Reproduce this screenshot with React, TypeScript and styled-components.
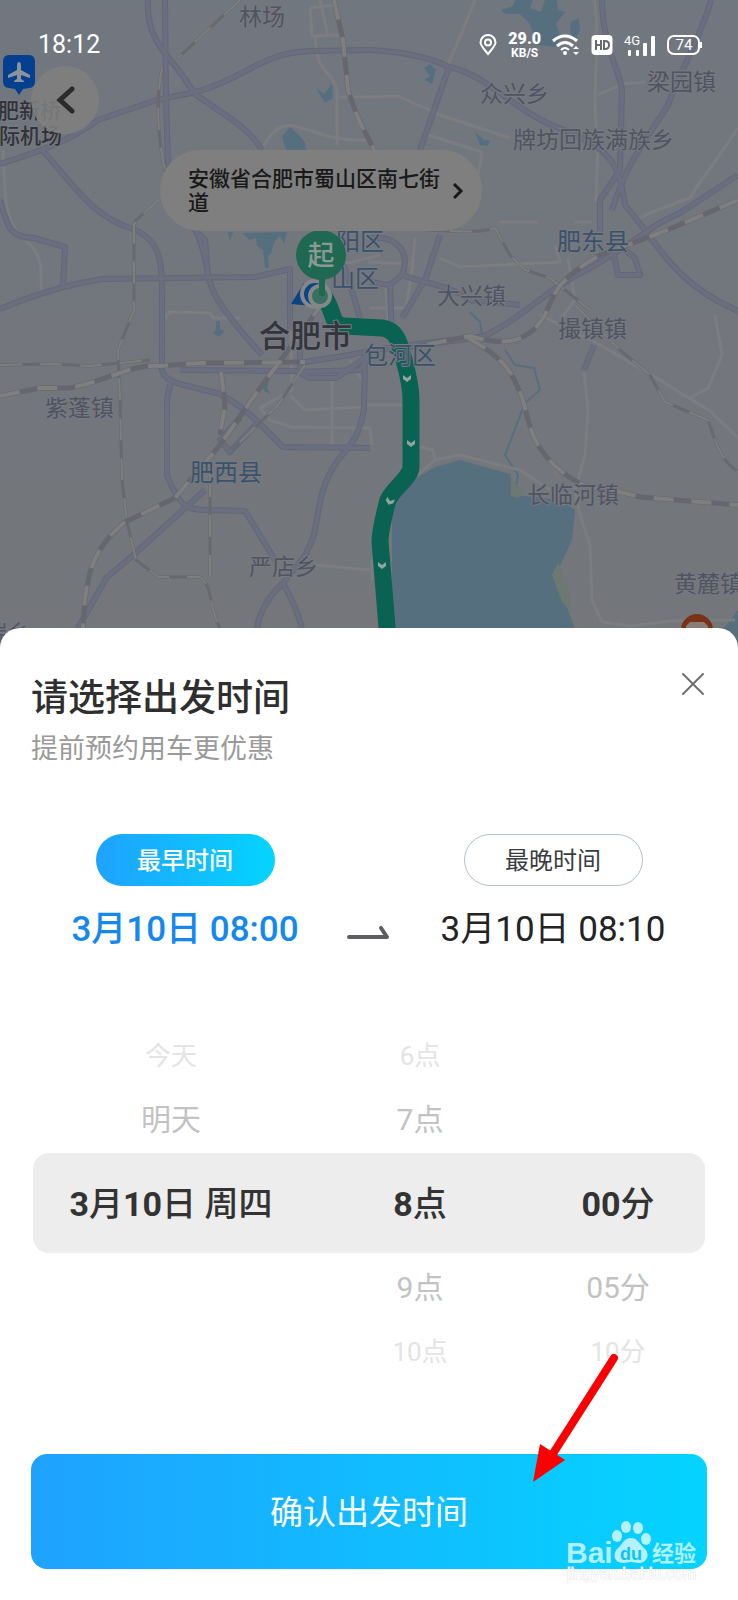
import React, { useState } from "react";
import styled, { createGlobalStyle, css } from "styled-components";

const GlobalStyle = createGlobalStyle`
  *, *::before, *::after { box-sizing: border-box; }
  body {
    margin: 0;
    background: #73777d;
    font-family: Roboto, "Noto Sans CJK SC", sans-serif;
    color: #2c2d2f;
  }
  button {
    font: inherit;
    color: inherit;
    border: 0;
    padding: 0;
    background: none;
    cursor: pointer;
  }
`;

const Page = styled.div`
  display: flex;
  flex-direction: column;
  min-height: 100vh;
  overflow: hidden;
`;

const MapArea = styled.header`
  position: relative;
  flex: 1 0 auto;
  min-height: 480px;
`;

const MapCanvas = styled.svg`
  position: absolute;
  inset: 0;
  width: 100%;
  height: 100%;
  font-family: "Noto Sans CJK SC", sans-serif;
`;

const StatusBar = styled.div`
  position: relative;
  display: flex;
  align-items: center;
  justify-content: space-between;
  padding: 29px 36px 0 38px;
  color: #fff;
`;

const Clock = styled.time`
  font-size: 25px;
  line-height: 32px;
`;

const StatusIcons = styled.div`
  display: flex;
  align-items: center;
  gap: 11px;
`;

const Speed = styled.div`
  display: flex;
  flex-direction: column;
  align-items: center;
  font-size: 12px;
  line-height: 12px;
  font-weight: 700;

  strong {
    font-size: 16px;
    line-height: 16px;
  }
`;

const BackButton = styled.button`
  position: relative;
  display: grid;
  place-items: center;
  width: 68px;
  height: 68px;
  margin: 5px 0 0 31px;
  border-radius: 50%;
  background: rgba(127, 127, 127, 0.88);
`;

const AddressCallout = styled.button`
  position: absolute;
  top: 150px;
  left: 160px;
  display: flex;
  align-items: center;
  gap: 8px;
  width: 322px;
  height: 81px;
  padding: 0 16px 0 28px;
  border-radius: 40px;
  background: #7f7f7f;
  color: #191919;
  font-size: 21px;
  line-height: 24px;
  font-weight: 500;
  text-align: left;

  span {
    flex: 1;
  }
`;

const Sheet = styled.main`
  position: relative;
  margin-top: -20px;
  padding-bottom: 31px;
  border-radius: 20px 20px 0 0;
  background: #fff;
`;

const SheetHeader = styled.div`
  display: flex;
  align-items: flex-start;
  justify-content: space-between;
  padding: 36px 25px 0 31px;
`;

const Title = styled.h1`
  margin: 13px 0 0;
  font-size: 37px;
  line-height: 44px;
  font-weight: 500;
  color: #2f2f2f;
`;

const Subtitle = styled.p`
  margin: 10px 0 0;
  font-size: 27px;
  line-height: 36px;
  color: #9a9a9a;
`;

const CloseButton = styled.button`
  display: grid;
  place-items: center;
  width: 40px;
  height: 40px;
`;

const Range = styled.div`
  display: grid;
  grid-template-columns: 1fr 44px 1fr;
  margin-top: 67px;
  padding: 0 23px;
`;

const RangeSide = styled.div`
  display: flex;
  flex-direction: column;
  align-items: center;
  gap: 20px;
`;

const RangeTab = styled.button<{ $active: boolean }>`
  width: 179px;
  height: 52px;
  padding-top: 2px;
  border-radius: 26px;
  font-size: 24px;
  line-height: 48px;
  ${({ $active }) =>
    $active
      ? css`
          background: linear-gradient(90deg, #1fa2ff, #04d4ff);
          color: #fff;
          font-weight: 500;
        `
      : css`
          border: 1px solid #b4bfc9;
          color: #3a3c3f;
        `}
`;

const RangeTime = styled.time<{ $active: boolean }>`
  font-size: 35px;
  line-height: 48px;
  white-space: nowrap;
  color: ${({ $active }) => ($active ? "#1488ee" : "#222426")};
  font-weight: ${({ $active }) => ($active ? 500 : 400)};
`;

const RangeArrow = styled.svg`
  align-self: end;
  margin-bottom: 14px;
`;

const Wheels = styled.div`
  position: relative;
  display: grid;
  grid-template-columns: 276fr 222fr 174fr;
  margin: 71px 33px 0;
`;

const WheelBand = styled.div`
  position: absolute;
  top: 128px;
  left: 0;
  right: 0;
  height: 100px;
  border-radius: 16px;
  background: #ededed;
`;

const Wheel = styled.div`
  position: relative;
  display: grid;
  grid-template-rows: 60px 68px 100px 68px 60px;
`;

type Distance = 0 | 1 | 2;

const wheelTone = {
  0: css`
    font-size: 34px;
    font-weight: 500;
    color: #333;
  `,
  1: css`
    font-size: 30px;
    color: #c2c2c2;
  `,
  2: css`
    font-size: 26px;
    color: #e4e4e4;
  `,
};

const WheelOption = styled.button<{ $distance: Distance }>`
  padding-bottom: 4px;
  white-space: nowrap;
  ${({ $distance }) => wheelTone[$distance]}

  b {
    font-weight: 700;
  }
`;

const ConfirmButton = styled.button`
  display: block;
  width: calc(100% - 62px);
  height: 115px;
  margin: 73px 31px 0;
  padding-bottom: 4px;
  border-radius: 16px;
  background: linear-gradient(90deg, #1fa2ff, #04d4ff);
  color: #fff;
  font-size: 33px;
`;

const PointerArrow = styled.svg`
  position: absolute;
  right: 116px;
  bottom: 114px;
  pointer-events: none;
`;

const Watermark = styled.svg`
  position: absolute;
  right: 27px;
  bottom: 8px;
  pointer-events: none;
`;

const expressways = [
  "M148 0 C146 34 162 50 177 68 L196 95 C230 118 250 130 262 150",
  "M165 0 L166 98 L168 164 C185 210 203 235 208 275 C214 300 225 310 240 330 L262 355",
  "M0 164 C45 150 70 140 98 120 L157 100 L200 91 C250 75 262 53 310 51 L370 50",
  "M42 150 C70 180 90 215 130 228 C160 238 163 260 162 300 L162 370 C165 385 190 385 220 394 C250 410 265 430 283 447 L370 448",
  "M0 200 C8 230 12 238 34 238 L65 247 L63 285",
  "M0 309 C40 292 70 284 103 279 L255 277 L290 269 L290 330",
  "M170 384 L167 400 L167 475 C180 508 187 510 210 510 L245 511 L275 560",
  "M205 490 L130 558 L107 577 L78 628",
  "M370 50 C410 52 435 60 449 67 C490 75 515 115 570 132 C610 150 620 165 625 205 L645 230 C670 265 690 290 738 311",
  "M449 67 L420 150",
  "M602 0 C603 50 620 70 622 90 L620 170 L600 200 L600 235",
  "M711 0 C700 40 680 70 668 105 C650 135 628 158 612 210",
  "M738 175 L680 213 C650 225 640 240 590 268 C545 290 520 320 484 336 C440 345 390 345 350 355 L305 362",
  "M300 345 L300 372 L360 370 L372 350 L410 345 L450 340",
  "M365 355 L364 410 C358 440 350 445 338 460 C310 500 325 525 303 558 L283 583 C270 595 260 610 257 628",
  "M283 583 C292 600 297 610 302 628",
  "M370 238 C400 235 410 255 402 275 L390 285 L370 282",
  "M440 235 L425 280 L402 318",
  "M402 275 C430 285 450 285 470 300 L520 305",
  "M614 255 L618 275 L640 275 L635 258 L612 240",
  "M180 370 L296 371 L310 378 L336 378 L365 358",
  "M240 418 L220 440 L230 452 L260 420",
  "M208 275 L205 240 L190 225",
  "M594 345 L584 370",
  "M325 238 L345 268 L360 318 M390 285 L392 340",
];

const minorRoads = [
  "M3 150 C5 200 5 220 20 235 C50 260 38 275 42 290",
  "M475 0 L465 25 L448 65",
  "M368 97 L398 96 L440 115 L510 138",
  "M428 135 L482 152 L478 175",
  "M594 0 C602 40 590 100 598 140 L596 200 L610 190",
  "M598 95 L622 84 L645 82",
  "M738 128 C710 170 700 180 690 198 C670 205 650 212 640 218",
  "M310 8 L312 36 L340 35 M320 0 L328 36 M310 8 L335 5",
  "M315 36 C318 80 330 65 337 90 L337 145 M340 97 L370 97",
  "M262 150 C270 130 285 120 300 128 C315 130 330 142 370 140",
  "M165 318 L170 312 L210 313 L213 318 L240 318 M290 300 L292 390 L260 408 L270 420 L292 427 L370 428",
  "M290 395 L305 410 L365 407 M332 380 L332 445 M350 360 L365 385 L366 405",
  "M440 258 L460 267 L560 262 L555 245 M368 262 L410 264",
  "M415 238 L412 270 L406 310 M385 280 L390 340 M370 308 L405 308",
  "M500 222 L538 222 M575 222 L592 222 M340 265 L380 255",
  "M568 258 L575 300 L560 320 M540 315 L595 342 L655 377 L710 411 L738 438",
  "M715 315 L722 355 L708 388 L690 398",
  "M584 372 L588 410 L585 455 L575 490 L580 515 L590 545 L592 600 L602 622 L630 626",
  "M418 475 L435 460 L460 455 L520 470 L550 490",
  "M315 565 L370 570 M372 560 L372 580 M630 626 L670 621 L735 620",
  "M365 405 L402 405 M370 428 L372 445 M420 447 L433 450 L435 460",
];

const mainRailways = [
  "M0 396 L40 388 L70 388 C110 380 130 364 160 366 L200 363 L305 362",
  "M325 300 L255 395 L220 445 L175 498 L125 522 C90 550 85 580 83 628",
  "M738 200 L660 233 L600 255 C560 278 555 290 545 315 C530 340 510 348 470 336 L400 350",
  "M468 338 C510 360 515 380 523 400 C530 430 535 450 560 470 C590 495 600 485 640 497 L738 505",
  "M334 0 L343 40 L348 90 C360 130 372 140 380 165",
  "M221 372 L225 405 L220 435",
];

const branchRailways = [
  "M0 365 L55 364 L90 366 L150 360",
  "M136 222 L134 225 L134 310 L118 350 L120 400 L122 480 L127 522 L136 560 L158 577 L200 577 C213 585 208 605 220 628",
  "M370 225 C430 230 475 235 495 228 L510 255 L525 270 L550 278 L590 310",
  "M575 305 L620 350 L650 375 L665 402 L708 420 C715 440 720 460 738 472",
  "M210 475 L210 577",
  "M240 0 L178 58",
  "M160 199 L134 222",
  "M162 68 C155 100 158 150 168 180",
  "M305 365 L278 405 L232 450",
];

type PlaceKind = "town" | "county" | "city";

const places: { name: string; x: number; y: number; kind: PlaceKind }[] = [
  { name: "林场", x: 239, y: 25, kind: "town" },
  { name: "众兴乡", x: 480, y: 102, kind: "town" },
  { name: "梁园镇", x: 647, y: 90, kind: "town" },
  { name: "牌坊回族满族乡", x: 513, y: 148, kind: "town" },
  { name: "肥东县", x: 557, y: 250, kind: "county" },
  { name: "大兴镇", x: 437, y: 304, kind: "town" },
  { name: "撮镇镇", x: 558, y: 337, kind: "town" },
  { name: "阳区", x: 336, y: 250, kind: "county" },
  { name: "山区", x: 331, y: 287, kind: "county" },
  { name: "包河区", x: 364, y: 364, kind: "county" },
  { name: "紫蓬镇", x: 45, y: 416, kind: "town" },
  { name: "肥西县", x: 190, y: 481, kind: "county" },
  { name: "严店乡", x: 249, y: 575, kind: "town" },
  { name: "长临河镇", x: 527, y: 503, kind: "town" },
  { name: "黄麓镇", x: 674, y: 592, kind: "town" },
  { name: "端乡", x: -16, y: 641, kind: "town" },
  { name: "合肥市", x: 259, y: 347, kind: "city" },
];

const placeColor: Record<PlaceKind, string> = {
  town: "#505362",
  county: "#3a516b",
  city: "#33343d",
};

const routeChevrons = [
  { x: 407, y: 378, turn: 0 },
  { x: 411, y: 443, turn: 0 },
  { x: 390, y: 501, turn: 20 },
  { x: 382, y: 565, turn: 0 },
];

function Lines({ paths }: { paths: string[] }) {
  return (
    <>
      {paths.map((d) => (
        <path key={d} d={d} />
      ))}
    </>
  );
}

function CityMap() {
  return (
    <MapCanvas viewBox="0 0 738 648" preserveAspectRatio="xMidYMid slice" aria-label="合肥市地图">
      <defs>
        <linearGradient id="land" x1="0" y1="0" x2="0" y2="1">
          <stop offset="0" stopColor="#71777f" />
          <stop offset="1" stopColor="#74767a" />
        </linearGradient>
      </defs>
      <rect width="738" height="648" fill="url(#land)" />

      <g fill="#566f7f">
        <path d="M435 467 L460 460 L510 474 L515 495 L560 500 L575 510 L572 540 L558 570 L568 610 L582 648 L392 648 L392 500 L418 477 Z" />
        <path d="M730 648 L724 628 L738 610 V648 Z" />
        <path d="M501 10 L513 6 L515 0 L533 0 L530 8 L541 12 L545 0 L557 0 L558 10 L565 12 L556 24 L561 38 L555 47 L537 45 L530 24 L520 14 L505 14 Z" />
        <path d="M570 22 L579 18 L580 30 L575 40 L571 35 Z M424 68 L430 64 L436 70 L432 84 L424 80 L430 76 Z M475 132 L484 140 L490 140 L488 146 L480 145 Z" />
        <path d="M316 88 L324 94 L332 84 L333 98 L325 103 Z M282 136 L290 127 L298 134 L305 142 L306 150 L286 150 Z" />
        <path d="M228 232 L233 232 L230 241 Z M242 233 L287 232 L284 244 L280 236 L274 242 L271 254 L268 256 L269 268 L265 268 L263 250 L257 246 L256 238 L250 240 Z" />
        <path d="M216 321 L220 321 L220 329 L225 331 L219 337 L213 333 L216 330 Z M262 382 L270 378 L267 388 L271 394 L264 391 Z" />
      </g>
      <path
        d="M470 312 L480 322 L482 334 M505 350 L515 365 L534 368 L540 390 L525 403 L505 455 L518 475 L514 498"
        fill="none"
        stroke="#566f7f"
        strokeWidth="2"
      />
      <path d="M558 563 L568 590 L572 612 L562 602 L552 575 Z M511 480 L525 492 L518 498 L511 496 Z" fill="#6c7870" />

      <g fill="none" strokeLinejoin="round">
        <g stroke="#7c7d80" strokeWidth="3">
          <Lines paths={minorRoads} />
        </g>
        <g stroke="#62677a" strokeWidth="6">
          <Lines paths={expressways} />
        </g>
        <g stroke="#6a6e7e" strokeWidth="4">
          <Lines paths={expressways} />
        </g>
        <g stroke="#67696f" strokeWidth="3">
          <Lines paths={branchRailways} />
        </g>
        <g stroke="#7d7e7e" strokeWidth="2" strokeDasharray="22 18">
          <Lines paths={branchRailways} />
        </g>
        <g stroke="#66676e" strokeWidth="5">
          <Lines paths={mainRailways} />
        </g>
        <g stroke="#7e7f7e" strokeWidth="4" strokeDasharray="20 18">
          <Lines paths={mainRailways} />
        </g>
      </g>

      <path
        d="M322 294 C334 306 330 326 344 326 L382 328 C398 330 400 345 404 360 Q411 385 411 400 L411 466 C411 478 395 486 388 500 C384 515 380 530 380 542 L384 590 L388 640"
        fill="none"
        stroke="#0a6253"
        strokeWidth="17"
        strokeLinejoin="round"
      />
      {routeChevrons.map((c) => (
        <path
          key={c.y}
          d="M-4 -3 L0 0 L4 -3 V1 L0 4 L-4 1 Z"
          fill="#8fa59f"
          transform={`translate(${c.x} ${c.y}) rotate(${c.turn})`}
        />
      ))}

      <g stroke="#777a80" strokeWidth="2" paintOrder="stroke" strokeLinejoin="round">
        {places.map((p) => (
          <text
            key={p.name}
            x={p.x}
            y={p.y}
            fontSize={p.kind === "city" ? 31 : p.kind === "county" ? 24 : 23}
            fontWeight={p.kind === "city" ? 500 : 400}
            fill={placeColor[p.kind]}
          >
            {p.name}
          </text>
        ))}
        <g fontSize="21" fontWeight="500" fill="#30323a">
          <text x="-2" y="118">肥新桥</text>
          <text x="-1" y="143">际机场</text>
        </g>
      </g>

      <path d="M9 55 H29 Q35 55 35 62 V81 Q35 88 29 88 L23 89 L19 95 L15 89 L9 88 Q3 88 3 81 V62 Q3 55 9 55 Z" fill="#053f8f" />
      <path
        d="M19 62 Q21 62 21 66 V70 L30 75 V78 L21 75 V79 L24 81 V82 H14 V81 L17 79 V75 L8 78 V75 L17 70 V66 Q17 62 19 62 Z"
        fill="#8d939c"
      />

      <path d="M304 283 L291 304 L312 306 Z" fill="#0b4483" />
      <circle cx="315" cy="294" r="13" fill="#0b4483" stroke="#858789" strokeWidth="4" />
      <circle cx="320" cy="296" r="10" fill="#39705f" stroke="#858789" strokeWidth="4" />
      <path d="M319 276 H325 V296 H319 Z" fill="#1f6852" />
      <circle cx="321" cy="255" r="25" fill="#1f6852" />
      <text x="321" y="265" fontSize="27" fontWeight="500" fill="#8b9a96" textAnchor="middle">起</text>

      <circle cx="697" cy="630" r="16" fill="#7a3216" />
      <path d="M686 626 L690 622 H704 L708 626 V630 H686 Z" fill="#8a7d78" />
    </MapCanvas>
  );
}

function StatusGlyphs() {
  return (
    <StatusIcons>
      <svg width="18" height="22" viewBox="0 0 18 22" fill="none" stroke="#fff" strokeWidth="2">
        <path d="M9 20 C4 14 1.500 11.500 1.500 8.500 A7.500 7.500 0 0 1 16.500 8.500 C16.500 11.500 14 14 9 20 Z" />
        <circle cx="9" cy="8.500" r="3" />
      </svg>
      <Speed>
        <strong>29.0</strong>
        <span>KB/S</span>
      </Speed>
      <svg width="28" height="22" viewBox="0 0 28 22" fill="none" stroke="#fff" strokeWidth="3">
        <path d="M1 7 Q13 -3 25 7" />
        <path d="M5 12 Q13 5 21 12" />
        <path d="M9 16 Q13 12 17 16" strokeWidth="2" />
        <circle cx="13" cy="19" r="2" fill="#fff" stroke="none" />
        <path d="M21 15 L24 12 L27 15 Z M21 18 L24 21 L27 18 Z" fill="#fff" stroke="none" />
      </svg>
      <svg width="22" height="22" viewBox="0 0 22 22">
        <rect x="0.500" y="1" width="21" height="20" rx="4" fill="#fff" />
        <path d="M5 6 V16 M10 6 V16 M5 11 H10 M13 7 V15 H14 Q18 15 18 11 Q18 7 14 7 Z" fill="none" stroke="#666a70" strokeWidth="2" />
      </svg>
      <svg width="32" height="24" viewBox="0 0 32 24" fill="#fff">
        <text x="0" y="12" fontSize="13" fontFamily="Roboto, sans-serif">4G</text>
        <rect x="4" y="17" width="3" height="6" rx="1" />
        <rect x="12" y="17" width="3" height="6" rx="1" />
        <rect x="19" y="10" width="4" height="13" rx="1" />
        <rect x="27" y="3" width="4" height="20" rx="1" />
      </svg>
      <svg width="35" height="20" viewBox="0 0 35 20" fill="none">
        <rect x="1" y="1" width="31" height="18" rx="6" stroke="#fff" strokeWidth="2" />
        <path d="M34 7 V13" stroke="#fff" strokeWidth="2" />
        <text x="17" y="15" fontSize="15" fill="#fff" textAnchor="middle" fontFamily="Roboto, sans-serif">74</text>
      </svg>
    </StatusIcons>
  );
}

type Option = { digits?: string; text: string; rest?: { digits: string; text: string } } | null;

const wheels: { label: string; options: Option[] }[] = [
  {
    label: "日期",
    options: [
      { text: "今天" },
      { text: "明天" },
      { digits: "3", text: "月", rest: { digits: "10", text: "日 周四" } },
      null,
      null,
    ],
  },
  {
    label: "小时",
    options: [
      { digits: "6", text: "点" },
      { digits: "7", text: "点" },
      { digits: "8", text: "点" },
      { digits: "9", text: "点" },
      { digits: "10", text: "点" },
    ],
  },
  {
    label: "分钟",
    options: [
      null,
      null,
      { digits: "00", text: "分" },
      { digits: "05", text: "分" },
      { digits: "10", text: "分" },
    ],
  },
];

function OptionText({ option, bold }: { option: NonNullable<Option>; bold: boolean }) {
  const Digits = bold ? "b" : "span";
  return (
    <>
      {option.digits && <Digits>{option.digits}</Digits>}
      {option.text}
      {option.rest && (
        <>
          <Digits>{option.rest.digits}</Digits>
          {option.rest.text}
        </>
      )}
    </>
  );
}

export default function App() {
  const [side, setSide] = useState<"earliest" | "latest">("earliest");
  const earliest = side === "earliest";

  return (
    <Page>
      <GlobalStyle />
      <MapArea>
        <CityMap />
        <StatusBar>
          <Clock>18:12</Clock>
          <StatusGlyphs />
        </StatusBar>
        <BackButton aria-label="返回">
          <svg width="20" height="30" viewBox="0 0 20 30" fill="none" stroke="#2b2b2b" strokeWidth="5" strokeLinecap="round">
            <path d="M17 4 L5 15 L17 26" />
          </svg>
        </BackButton>
        <AddressCallout>
          <span>安徽省合肥市蜀山区南七街道</span>
          <svg width="16" height="18" viewBox="0 0 16 18" fill="none" stroke="#191919" strokeWidth="3">
            <path d="M4 2 L11 9 L4 16" />
          </svg>
        </AddressCallout>
      </MapArea>

      <Sheet>
        <SheetHeader>
          <div>
            <Title>请选择出发时间</Title>
            <Subtitle>提前预约用车更优惠</Subtitle>
          </div>
          <CloseButton aria-label="关闭">
            <svg width="24" height="24" viewBox="0 0 24 24" fill="none" stroke="#6f6f6f" strokeWidth="2" strokeLinecap="round">
              <path d="M2 2 L22 22 M22 2 L2 22" />
            </svg>
          </CloseButton>
        </SheetHeader>

        <Range>
          <RangeSide>
            <RangeTab $active={earliest} aria-pressed={earliest} onClick={() => setSide("earliest")}>
              最早时间
            </RangeTab>
            <RangeTime $active={earliest}>3月10日 08:00</RangeTime>
          </RangeSide>
          <RangeArrow width="44" height="16" viewBox="0 0 44 16" aria-hidden="true">
            <path d="M2 13 H40 L34 4" fill="none" stroke="#5c5e62" strokeWidth="4" strokeLinecap="round" strokeLinejoin="round" />
          </RangeArrow>
          <RangeSide>
            <RangeTab $active={!earliest} aria-pressed={!earliest} onClick={() => setSide("latest")}>
              最晚时间
            </RangeTab>
            <RangeTime $active={!earliest}>3月10日 08:10</RangeTime>
          </RangeSide>
        </Range>

        <Wheels>
          <WheelBand />
          {wheels.map((wheel) => (
            <Wheel key={wheel.label} role="listbox" aria-label={wheel.label}>
              {wheel.options.map((option, i) =>
                option ? (
                  <WheelOption
                    key={i}
                    role="option"
                    aria-selected={i === 2}
                    $distance={Math.abs(i - 2) as Distance}
                  >
                    <OptionText option={option} bold={i === 2} />
                  </WheelOption>
                ) : (
                  <span key={i} />
                ),
              )}
            </Wheel>
          ))}
        </Wheels>

        <ConfirmButton>确认出发时间</ConfirmButton>

        <Watermark width="144" height="72" viewBox="0 0 144 72" fill="#fff" fillOpacity="0.7" aria-hidden="true">
          <text x="-1" y="43" fontSize="30" fontWeight="700" fontFamily="Liberation Sans, sans-serif">Bai</text>
          <path d="M64 18 C70 18 72 23 77 28 C84 34 80 43 72 43 L64 42 L56 43 C47 43 45 34 51 28 C56 24 57 18 64 18 Z" />
          <ellipse cx="50" cy="16" rx="5" ry="6" />
          <ellipse cx="59" cy="7" rx="5" ry="6" />
          <ellipse cx="71" cy="8" rx="5" ry="6" />
          <ellipse cx="79" cy="19" rx="5" ry="6" />
          <text x="64" y="40" fontSize="18" fontWeight="700" fontFamily="Liberation Sans, sans-serif" fill="#0bc4f5" fillOpacity="1" textAnchor="middle">du</text>
          <text x="85" y="41" fontSize="22" fontWeight="700" fontFamily="Noto Sans CJK SC, sans-serif">经验</text>
          <text x="0" y="59" fontSize="16" fontFamily="Liberation Sans, sans-serif" stroke="#e6e6e6" strokeWidth="1" paintOrder="stroke" fillOpacity="1">
            jingyan.baidu.com
          </text>
        </Watermark>

        <PointerArrow width="90" height="132" viewBox="0 0 90 132" aria-hidden="true">
          <path d="M82 4 L22 98" stroke="#fa0000" strokeWidth="8" strokeLinecap="round" />
          <path d="M1 128 L8 90 L33 106 Z" fill="#fa0000" />
        </PointerArrow>
      </Sheet>
    </Page>
  );
}
